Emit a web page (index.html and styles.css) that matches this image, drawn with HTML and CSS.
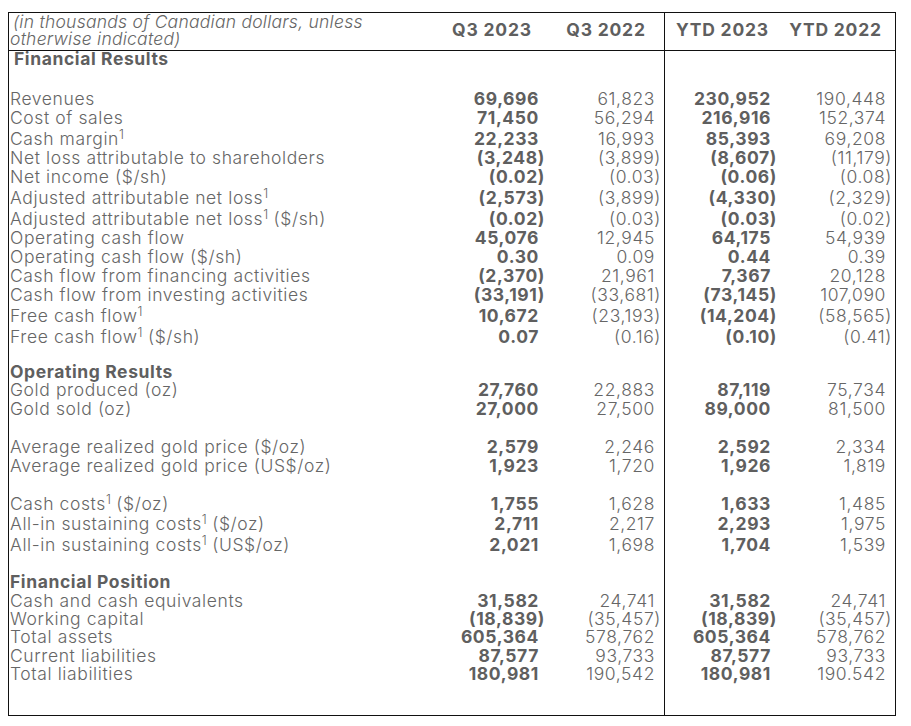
FILE: index.html
```html
<!DOCTYPE html>
<html lang="en">
<head>
    <meta charset="UTF-8">
    <meta name="viewport" content="width=device-width, initial-scale=1.0">
    <title>Q3 2023 Highlights</title>
    <link rel="stylesheet" href="styles.css">
</head>
<body>
    <table class="results">
        <colgroup>
            <col class="c-label">
            <col class="c-q3a">
            <col class="c-q3b">
            <col class="c-ytda">
            <col class="c-ytdb">
        </colgroup>
        <thead>
            <tr>
                <th class="note">(in thousands of Canadian dollars, unless<br>otherwise indicated)</th>
                <th>Q3 2023</th>
                <th>Q3 2022</th>
                <th>YTD 2023</th>
                <th class="last">YTD 2022</th>
            </tr>
        </thead>

        <!-- Financial results -->
        <tbody class="sec-a">
            <tr class="title first"><td>Financial Results</td><td></td><td></td><td></td><td></td></tr>
            <tr class="lead"><td>Revenues</td><td>69,696</td><td>61,823</td><td>230,952</td><td>190,448</td></tr>
            <tr><td>Cost of sales</td><td>71,450</td><td>56,294</td><td>216,916</td><td>152,374</td></tr>
            <tr class="fn"><td>Cash margin<sup>1</sup></td><td>22,233</td><td>16,993</td><td>85,393</td><td>69,208</td></tr>
            <tr><td>Net loss attributable to shareholders</td><td class="neg">(3,248)</td><td class="neg">(3,899)</td><td class="neg">(8,607)</td><td class="neg">(11,179)</td></tr>
            <tr><td>Net income ($/sh)</td><td class="neg">(0.02)</td><td class="neg">(0.03)</td><td class="neg">(0.06)</td><td class="neg">(0.08)</td></tr>
            <tr class="fn"><td>Adjusted attributable net loss<sup>1</sup></td><td class="neg">(2,573)</td><td class="neg">(3,899)</td><td class="neg">(4,330)</td><td class="neg">(2,329)</td></tr>
            <tr class="fn"><td>Adjusted attributable net loss<sup>1</sup> ($/sh)</td><td class="neg">(0.02)</td><td class="neg">(0.03)</td><td class="neg">(0.03)</td><td class="neg">(0.02)</td></tr>
            <tr><td>Operating cash flow</td><td>45,076</td><td>12,945</td><td>64,175</td><td>54,939</td></tr>
            <tr><td>Operating cash flow ($/sh)</td><td>0.30</td><td>0.09</td><td>0.44</td><td>0.39</td></tr>
            <tr><td>Cash flow from financing activities</td><td class="neg">(2,370)</td><td>21,961</td><td>7,367</td><td>20,128</td></tr>
            <tr><td>Cash flow from investing activities</td><td class="neg">(33,191)</td><td class="neg">(33,681)</td><td class="neg">(73,145)</td><td>107,090</td></tr>
            <tr class="fn"><td>Free cash flow<sup>1</sup></td><td>10,672</td><td class="neg">(23,193)</td><td class="neg">(14,204)</td><td class="neg">(58,565)</td></tr>
            <tr class="fn"><td>Free cash flow<sup>1</sup> ($/sh)</td><td>0.07</td><td class="neg">(0.16)</td><td class="neg">(0.10)</td><td class="neg">(0.41)</td></tr>
        </tbody>

        <!-- Operating results -->
        <tbody class="sec-b">
            <tr class="title head-op"><td>Operating Results</td><td></td><td></td><td></td><td></td></tr>
            <tr><td>Gold produced (oz)</td><td>27,760</td><td>22,883</td><td>87,119</td><td>75,734</td></tr>
            <tr><td>Gold sold (oz)</td><td>27,000</td><td>27,500</td><td>89,000</td><td>81,500</td></tr>
            <tr class="gap"><td>Average realized gold price ($/oz)</td><td>2,579</td><td>2,246</td><td>2,592</td><td>2,334</td></tr>
            <tr><td>Average realized gold price (US$/oz)</td><td>1,923</td><td>1,720</td><td>1,926</td><td>1,819</td></tr>
            <tr class="gap"><td>Cash costs<sup>1</sup> ($/oz)</td><td>1,755</td><td>1,628</td><td>1,633</td><td>1,485</td></tr>
            <tr class="fn"><td>All-in sustaining costs<sup>1</sup> ($/oz)</td><td>2,711</td><td>2,217</td><td>2,293</td><td>1,975</td></tr>
            <tr class="fn"><td>All-in sustaining costs<sup>1</sup> (US$/oz)</td><td>2,021</td><td>1,698</td><td>1,704</td><td>1,539</td></tr>
        </tbody>

        <!-- Financial position -->
        <tbody class="sec-b">
            <tr class="title head-fp"><td>Financial Position</td><td></td><td></td><td></td><td></td></tr>
            <tr><td>Cash and cash equivalents</td><td>31,582</td><td>24,741</td><td>31,582</td><td>24,741</td></tr>
            <tr><td>Working capital</td><td class="neg">(18,839)</td><td class="neg">(35,457)</td><td class="neg">(18,839)</td><td class="neg">(35,457)</td></tr>
            <tr><td>Total assets</td><td>605,364</td><td>578,762</td><td>605,364</td><td>578,762</td></tr>
            <tr><td>Current liabilities</td><td>87,577</td><td>93,733</td><td>87,577</td><td>93,733</td></tr>
            <tr class="end"><td>Total liabilities</td><td>180,981</td><td>190,542</td><td>180,981</td><td>190.542</td></tr>
        </tbody>
    </table>
</body>
</html>
```

FILE: styles.css
```css
body {
    margin: 12px 8px;
    font-family: Inter, "Liberation Sans", sans-serif;
    color: #666;
    background-color: #fff;
}
.results {
    width: 888px;
    border: 1px solid #111;
    border-spacing: 0;
    table-layout: fixed;
    font-size: 17.5px;
    font-weight: 300;
    letter-spacing: 0.6px;
}
.c-label { width: 427px; }
.c-q3a { width: 112px; }
.c-q3b { width: 116px; }
.c-ytda { width: 116px; }
.c-ytdb { width: 115px; }

/* header */
.results th {
    padding: 8px 0 0 0;
    line-height: 17px;
    font-weight: 700;
    letter-spacing: 0.8px;
    color: #5f5f5f;
    text-align: center;
    vertical-align: top;
    white-space: nowrap;
    border-bottom: 1px solid #111;
}
.results th.note {
    padding: 0 0 3px 1px;
    text-align: left;
    text-indent: 3px;
    font-style: italic;
    font-weight: 300;
    letter-spacing: 0.25px;
    color: #666;
}
.results th.last {
    padding-right: 4px;
}

/* body cells */
.results td {
    padding: 0 9px 0 0;
    line-height: 19px;
    text-align: right;
    vertical-align: top;
    white-space: nowrap;
}
.results td:first-child {
    padding-left: 1px;
    text-align: left;
}
.results td.neg {
    padding-right: 3px;
}
.results td:nth-child(2),
.results td:nth-child(4) {
    font-weight: 700;
    color: #5f5f5f;
}
.results td:nth-child(4),
.results th:nth-child(4) {
    border-left: 1px solid #111;
}
.sec-b td {
    line-height: 18.4px;
}

/* section spacing */
.title td {
    font-weight: 700;
    color: #5f5f5f;
}
.first td {
    line-height: 15px;
    text-indent: 4px;
}
.lead td { padding-top: 23px; }
.fn td { padding-top: 2px; }
.gap td { padding-top: 20px; }
.head-op td { padding-top: 17px; }
.head-fp td { padding-top: 19px; }
.end td { padding-bottom: 31.4px; }

sup {
    font-size: 12.5px;
    line-height: 0;
    vertical-align: 6.5px;
    letter-spacing: 0;
}
```
